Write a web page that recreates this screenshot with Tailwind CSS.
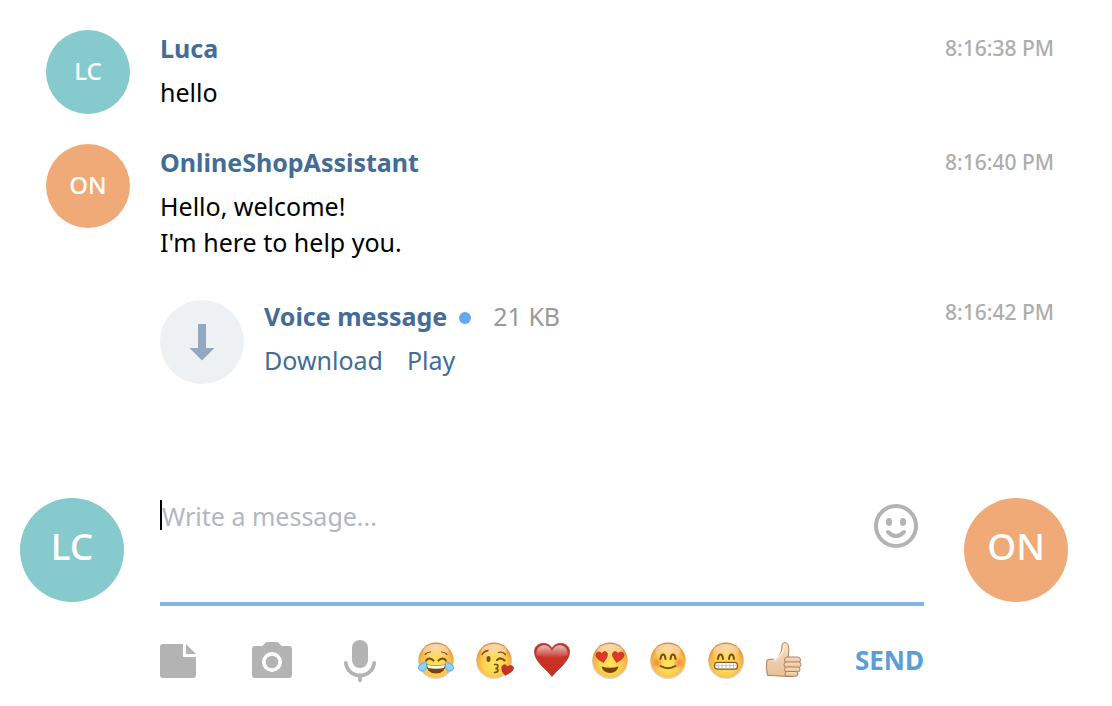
<!DOCTYPE html>
<html lang="en">
<head>
<meta charset="utf-8">
<meta name="viewport" content="width=device-width, initial-scale=1">
<title>Chat</title>
<script src="https://cdn.jsdelivr.net/npm/@tailwindcss/browser@4"></script>
</head>
<body class="flex min-h-screen flex-col bg-white font-['Lucida_Grande','Noto_Sans',sans-serif] text-[25px] leading-9 text-black">

<!-- Shared gradients for the emoji -->
<svg class="absolute size-0" aria-hidden="true">
  <defs>
    <radialGradient id="face" cx="50%" cy="62%" r="58%">
      <stop offset="0" stop-color="#ffe559"/><stop offset=".5" stop-color="#fdd251"/><stop offset=".82" stop-color="#f7b148"/><stop offset="1" stop-color="#e38c35"/>
    </radialGradient>
    <linearGradient id="shine" x1="0" y1="0" x2="0" y2="1">
      <stop offset="0" stop-color="#fff" stop-opacity=".65"/><stop offset="1" stop-color="#fff" stop-opacity="0"/>
    </linearGradient>
    <linearGradient id="heart" x1="0" y1="0" x2="0" y2="1">
      <stop offset="0" stop-color="#bf3a33"/><stop offset=".5" stop-color="#cd3024"/><stop offset="1" stop-color="#c0301f"/>
    </linearGradient>
    <linearGradient id="skin" x1="0" y1="0" x2="0" y2="1">
      <stop offset="0" stop-color="#f6dfc3"/><stop offset="1" stop-color="#e8bf97"/>
    </linearGradient>
    <radialGradient id="blush"><stop offset="0" stop-color="#f4703a" stop-opacity=".75"/><stop offset="1" stop-color="#f4703a" stop-opacity="0"/></radialGradient>
    <g id="head">
      <ellipse cx="18" cy="19.500" rx="17.800" ry="17.500" fill="#000" opacity=".16"/>
      <circle cx="18" cy="18" r="17.500" fill="url(#face)"/>
      <ellipse cx="18" cy="9.500" rx="13" ry="7.500" fill="url(#shine)"/>
    </g>
  </defs>
</svg>

<main class="flex flex-col pt-[30px] pr-[58px] pl-[46px]">
  <article class="flex items-start gap-[30px]">
    <div class="flex size-[84px] shrink-0 items-center justify-center rounded-full bg-[#86cacd] pb-0.5 text-[24px] font-medium text-white">LC</div>
    <div class="min-w-0 flex-1">
      <a href="#" class="block font-bold text-[#436c96]">Luca</a>
      <p class="mt-2">hello</p>
    </div>
    <time class="text-[21px] font-medium text-[#adadad]">8:16:38 PM</time>
  </article>

  <article class="mt-[30px] flex items-start gap-[30px]">
    <div class="flex size-[84px] shrink-0 items-center justify-center rounded-full bg-[#f0aa78] pb-0.5 text-[24px] font-medium text-white">ON</div>
    <div class="min-w-0 flex-1">
      <a href="#" class="block font-bold text-[#436c96]">OnlineShopAssistant</a>
      <p class="mt-2">Hello, welcome!<br>I'm here to help you.</p>
    </div>
    <time class="text-[21px] font-medium text-[#adadad]">8:16:40 PM</time>
  </article>

  <article class="mt-10 flex items-start gap-5 pl-[114px]">
    <button type="button" aria-label="Download voice message" class="size-[84px] shrink-0 rounded-full bg-[#edf1f4]">
      <svg viewBox="0 0 84 84" class="size-full" fill="#93a8be"><path d="M38 24h8v24h8.500L42 60.500 29.500 48H38z"/></svg>
    </button>
    <div class="min-w-0 flex-1 leading-8 text-[#436c96]">
      <div class="flex items-center">
        <span class="font-bold">Voice message</span>
        <span class="mt-1 ml-3 size-3 rounded-full bg-[#64a9ec]"></span>
        <span class="ml-[22px] text-[#999]">21 KB</span>
      </div>
      <div class="mt-3 flex gap-6">
        <a href="#">Download</a>
        <a href="#">Play</a>
      </div>
    </div>
    <time class="text-[21px] leading-6 font-medium text-[#adadad]">8:16:42 PM</time>
  </article>
</main>

<form class="mt-auto flex items-start pr-11 pb-6 pl-5">
  <div class="flex size-[104px] shrink-0 items-center justify-center rounded-full bg-[#86cacd] pb-2 text-[37px] font-medium text-white">LC</div>
  <div class="mr-10 ml-9 min-w-0 flex-1">
    <div class="relative flex items-start border-b-4 border-[#82b4e1]">
      <span class="absolute top-0.5 left-0 h-[30px] w-0.5 bg-black"></span>
      <textarea aria-label="Message" placeholder="Write a message..." class="block h-[104px] min-w-0 flex-1 resize-none pl-0.5 outline-none placeholder:text-[#b1b7be]"></textarea>
      <button type="button" aria-label="Emoji" class="mt-1.5 mr-1.5 size-11 shrink-0">
        <svg viewBox="0 0 44 44" class="size-full">
          <circle cx="22" cy="22" r="20" fill="none" stroke="#b3b3b3" stroke-width="4"/>
          <ellipse cx="15" cy="18" rx="3" ry="4" fill="#b3b3b3"/><ellipse cx="29" cy="18" rx="3" ry="4" fill="#b3b3b3"/>
          <path d="M14 28Q22 36 30 28" fill="none" stroke="#b3b3b3" stroke-width="4" stroke-linecap="round"/>
        </svg>
      </button>
    </div>
    <div class="mt-8 flex h-11 items-center">
      <div class="flex gap-[52px]">
        <button type="button" aria-label="Attach file" class="h-11 w-10">
          <svg viewBox="0 0 40 44" class="size-full" fill="#b3b3b3"><path d="M3 6H23V19H36V37a3 3 0 0 1-3 3H3a3 3 0 0 1-3-3V9a3 3 0 0 1 3-3z"/><path d="M26 6 36 16H26z"/></svg>
        </button>
        <button type="button" aria-label="Send photo" class="h-11 w-10">
          <svg viewBox="0 0 40 44" class="size-full" fill="#b3b3b3"><path fill-rule="evenodd" d="M3 8h7.500l2.800-3.200Q14 4 15.200 4h9.600q1.200 0 1.900.8L29.500 8H37a3 3 0 0 1 3 3v26a3 3 0 0 1-3 3H3a3 3 0 0 1-3-3V11a3 3 0 0 1 3-3zM20 14a10 10 0 1 0 0 20 10 10 0 1 0 0-20z"/><circle cx="20" cy="24" r="6.300"/></svg>
        </button>
        <button type="button" aria-label="Record voice message" class="h-11 w-10">
          <svg viewBox="0 0 40 44" class="size-full"><rect x="8" y="2" width="16" height="28" rx="8" fill="#b3b3b3"/><path d="M1.900 24.800C2.500 32 8.500 37.500 16 37.500S29.500 32 30.100 24.800M16 38v4.300" fill="none" stroke="#b3b3b3" stroke-width="3.800" stroke-linecap="round"/></svg>
        </button>
      </div>
      <div class="ml-[34px] flex gap-[22px]">
        <button type="button" aria-label="Tears of joy" class="size-9">
          <svg viewBox="0 0 36 36" class="size-full overflow-visible"><use href="#head"/>
            <g fill="none" stroke="#7a4a12" stroke-linecap="round"><path d="M8 18.500Q11 14.500 15.500 18.500M20.500 18.500Q25 14.500 28 18.500" stroke-width="2"/><path d="M7 12.500Q9.500 10 12.500 10M29 12.500Q26.500 10 23.500 10" stroke-width="1.100"/></g>
            <path d="M8 22.500Q18 24 28 22.500Q27 31.500 18 31.500Q9 31.500 8 22.500z" fill="#79420f"/><path d="M9 23Q18 24.500 27 23L26 26Q18 27.500 10 26z" fill="#fff"/>
            <path d="M7.500 19C9.800 23 9 28.500 4.500 29 .2 29.300-.8 25 1.800 22.800 3.500 21.500 5.800 21 7.500 19zM28.500 19C26.200 23 27 28.500 31.500 29 35.800 29.300 36.800 25 34.200 22.800 32.500 21.500 30.200 21 28.500 19z" fill="#8fd0f7" stroke="#469edc" stroke-width=".8"/>
          </svg>
        </button>
        <button type="button" aria-label="Blowing a kiss" class="size-9">
          <svg viewBox="0 0 36 36" class="size-full overflow-visible"><use href="#head"/>
            <g fill="none" stroke="#7a4a12" stroke-linecap="round"><path d="M6 12.500Q8 9 12 8.500M22.500 10.500Q26.500 9 29.500 12.500" stroke-width="1.300"/><path d="M21 18Q25 14.500 28.500 18.500" stroke-width="2"/><path d="M18.500 22.500Q22.500 22 22 24.500 21.500 26 19.500 26.500 22.500 26.500 22 28.800 21.500 30.500 18.500 30.500" stroke-width="1.500"/></g>
            <ellipse cx="12.500" cy="17" rx="2" ry="3" fill="#7a4a12"/>
            <path d="M29.500 33.500C25.500 30 24.500 24.500 27.500 23 29.500 22 31 24 31.200 25.200 33 22.700 37.300 23.200 37.500 26 37.500 29.500 33 31 29.500 33.500z" fill="url(#heart)" stroke="#a91f16" stroke-width=".6"/>
          </svg>
        </button>
        <button type="button" aria-label="Heart" class="size-9">
          <svg viewBox="0 0 36 36" class="size-full overflow-visible"><path d="M18 34.500C13.500 28 .5 20 .5 9.800.5-.5 15-1 18 6.700 21-1 35.500-.5 35.500 9.800 35.500 20 22.500 28 18 34.500z" fill="url(#heart)" stroke="#a7352e" stroke-width=".8"/><path d="M2.500 13.500C1 1.500 15 0 18 9.500 21 0 35 1.500 33.500 13.500Q18 19 2.500 13.500z" fill="url(#shine)"/></svg>
        </button>
        <button type="button" aria-label="Heart eyes" class="size-9">
          <svg viewBox="0 0 36 36" class="size-full overflow-visible"><use href="#head"/>
            <path d="M11.500 20.500C8.500 18.500 4 17 4 12.800 4.200 9.500 8.500 9.200 10 12 11 8.500 15.500 9 15.500 12.500 15.500 15.500 13 17.500 11.500 20.500zM24.500 20.500C27.500 18.500 32 17 32 12.800 31.800 9.500 27.500 9.200 26 12 25 8.500 20.500 9 20.500 12.500 20.500 15.500 23 17.500 24.500 20.500z" fill="#dc3a26" stroke="#b92b1c" stroke-width=".7"/>
            <path d="M9.500 24.500Q18 27 26.500 24.500Q25 31 18 31Q11 31 9.500 24.500z" fill="#79420f"/>
          </svg>
        </button>
        <button type="button" aria-label="Smiling" class="size-9">
          <svg viewBox="0 0 36 36" class="size-full overflow-visible"><use href="#head"/><circle cx="7" cy="21" r="6" fill="url(#blush)"/><circle cx="29" cy="21" r="6" fill="url(#blush)"/>
            <g fill="none" stroke="#7a4a12" stroke-width="2" stroke-linecap="round"><path d="M10.500 17Q11 12.500 13 12.500T15.500 17M20.500 17Q21 12.500 23 12.500T25.500 17M10.500 24Q18 28.500 25.500 24"/></g>
          </svg>
        </button>
        <button type="button" aria-label="Grinning" class="size-9">
          <svg viewBox="0 0 36 36" class="size-full overflow-visible"><use href="#head"/>
            <path d="M10 17Q10.500 12.500 12.500 12.500T15 17M21 17Q21.500 12.500 23.500 12.500T26 17" fill="none" stroke="#7a4a12" stroke-width="2" stroke-linecap="round"/>
            <rect x="6.500" y="20.300" width="23" height="6.900" rx="3" fill="#fff" stroke="#84521e" stroke-width="1.200"/><path d="M7 23.700H29M10.500 20.500V27M14.200 20.500V27M18 20.500V27M21.800 20.500V27M25.500 20.500V27" stroke="#bcaea4" stroke-width=".7"/>
          </svg>
        </button>
        <button type="button" aria-label="Thumbs up" class="size-9">
          <svg viewBox="0 0 36 36" class="size-full overflow-visible">
            <g fill="url(#skin)" stroke="#a97550" stroke-width=".9" stroke-linejoin="round">
              <path d="M1 18Q5 16.500 9.500 17.500C13.500 14.500 16 10 16 3.500 16-.2 21.500-.7 22.500 4 23.300 8 22.500 12.500 22 15.500L31.500 16.500V33Q23 35.500 13 34 7 33.500 1.500 33.500Q-.5 26 1 18z"/>
              <rect x="18.500" y="15" width="16" height="5.800" rx="2.900"/><rect x="18" y="20" width="17" height="5.500" rx="2.700"/><rect x="18.500" y="25" width="15.500" height="5" rx="2.500"/><rect x="19" y="29.500" width="13" height="4.800" rx="2.400"/>
            </g>
            <path d="M8 18.500C14 15 17.500 10 18 4.500" fill="none" stroke="#fdf0dc" stroke-width="1.500" stroke-linecap="round"/>
          </svg>
        </button>
      </div>
      <button type="submit" class="ml-auto text-[26px] font-bold text-[#5b9dd6]">SEND</button>
    </div>
  </div>
  <div class="flex size-[104px] shrink-0 items-center justify-center rounded-full bg-[#f0aa78] pb-2 text-[37px] font-medium text-white">ON</div>
</form>
</body>
</html>
